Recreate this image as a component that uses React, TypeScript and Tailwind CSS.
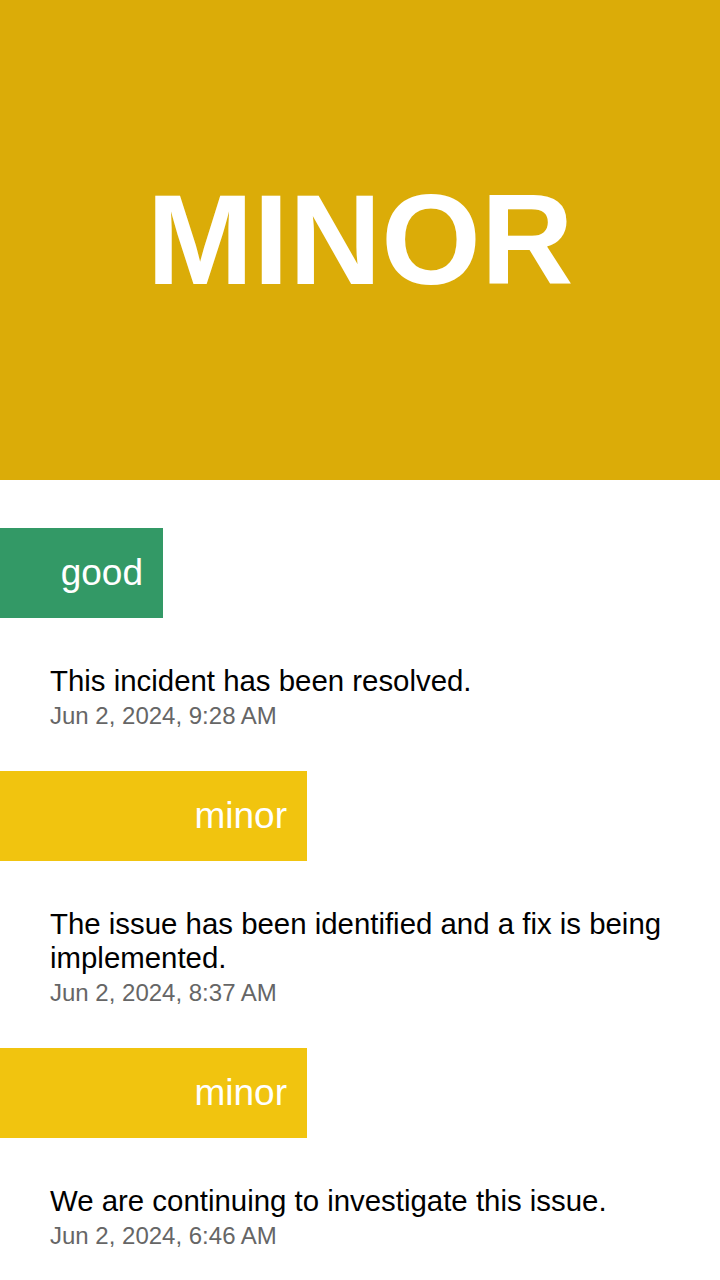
const updates = [
  {
    status: "good",
    color: "bg-[#339966]",
    width: "w-[163px]",
    body: "This incident has been resolved.",
    time: "Jun 2, 2024, 9:28 AM",
  },
  {
    status: "minor",
    color: "bg-[#f1c40f]",
    width: "w-[307px]",
    body: "The issue has been identified and a fix is being implemented.",
    time: "Jun 2, 2024, 8:37 AM",
  },
  {
    status: "minor",
    color: "bg-[#f1c40f]",
    width: "w-[307px]",
    body: "We are continuing to investigate this issue.",
    time: "Jun 2, 2024, 6:46 AM",
  },
];

export default function App() {
  return (
    <div className="min-h-screen bg-white font-['Liberation_Sans',Arial,sans-serif]">
      <header className="flex h-[480px] items-center justify-center bg-[#dbac08]">
        <h1 className="text-[128px] font-bold leading-none text-white">MINOR</h1>
      </header>

      <main className="pt-12 pb-10">
        {updates.map((u, i) => (
          <section key={i} className="mb-[41px]">
            <div
              className={`${u.color} ${u.width} flex h-[90px] items-center justify-end pr-5 text-[37px] text-white`}
            >
              {u.status}
            </div>
            <div className="mt-[46px] pl-[50px] pr-[50px]">
              <p className="text-[29.4px] leading-[34px] text-black">{u.body}</p>
              <p className="mt-[3px] text-[24px] leading-[29px] text-[#666666]">{u.time}</p>
            </div>
          </section>
        ))}
      </main>
    </div>
  );
}
